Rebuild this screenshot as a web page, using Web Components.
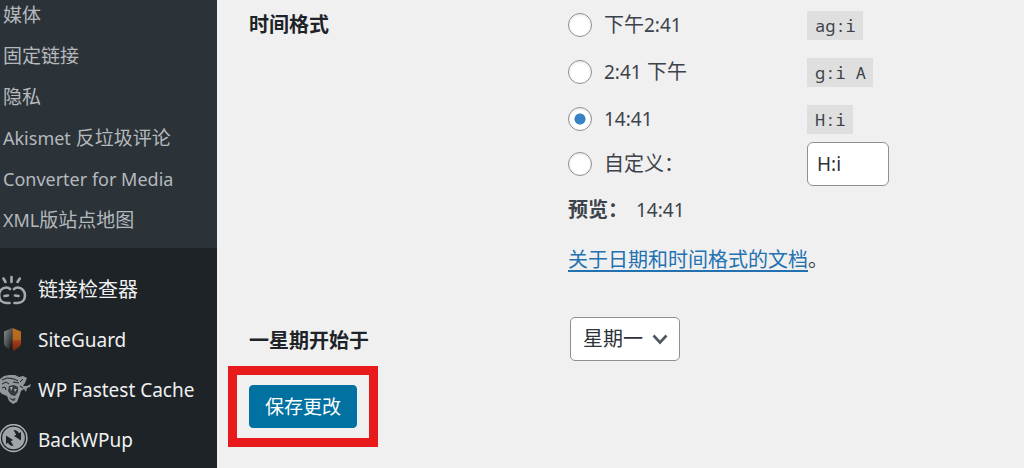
<!DOCTYPE html>
<html lang="zh-CN">
<head>
<meta charset="utf-8">
<title>常规选项</title>
<style>
  body {
    margin: 0;
    background: #f0f0f0;
    color: #3c434a;
    font-family: "Noto Sans", "Noto Sans CJK SC", sans-serif;
    font-size: 20px;
    line-height: 30px;
    overflow: hidden;
  }
</style>
</head>
<body>
<admin-shell>
  <sub-menu slot="side">
    <sub-item>媒体</sub-item>
    <sub-item>固定链接</sub-item>
    <sub-item>隐私</sub-item>
    <sub-item><small>Akismet</small> 反垃圾评论</sub-item>
    <sub-item><small>Converter for Media</small></sub-item>
    <sub-item><small>XML</small>版站点地图</sub-item>
  </sub-menu>
  <main-menu slot="side">
    <menu-item>
      <svg slot="icon" viewBox="0 0 32 32" width="32" height="32" fill="none" stroke="#a7aaad" stroke-width="2.600" stroke-linecap="round" aria-hidden="true">
        <path d="M3.500 4.500 5.500 8M11.500 3V8M19.800 4.500 17.500 8"/>
        <path d="M10 15C9 14 8 13.500 6.500 13.500 2 13.500-.8 17-.8 21.500S2 29 6.500 29H9.500M14 15C15.200 14 16.300 13.500 17.500 13.500 22 13.500 25 17 25 21.500S22 29 17.500 29H14.500M4.500 22 8 21.500M15 21.500 18.500 22"/>
      </svg>
      链接检查器
    </menu-item>
    <menu-item>
      <svg slot="icon" viewBox="0 0 32 32" width="32" height="32" aria-hidden="true">
        <defs>
          <linearGradient id="steel" x1="0" y1="0" x2="1" y2="1"><stop offset="0" stop-color="#8b8d8f"/><stop offset=".45" stop-color="#55585a"/><stop offset="1" stop-color="#070707"/></linearGradient>
          <linearGradient id="ember" x1="0" y1="0" x2="0" y2="1"><stop offset="0" stop-color="#b9721d"/><stop offset=".5" stop-color="#b2651c"/><stop offset=".56" stop-color="#a63d1d"/><stop offset="1" stop-color="#6b2413"/></linearGradient>
        </defs>
        <path d="M12.500 4 4 7.500V20C5 23 9 25.500 12.500 27z" fill="url(#steel)"/>
        <path d="M12.500 4 21 7.500V20C20 23 16 25.500 12.500 27z" fill="url(#ember)"/>
      </svg>
      <small>SiteGuard</small>
    </menu-item>
    <menu-item>
      <svg slot="icon" viewBox="0 0 32 32" width="32" height="32" aria-hidden="true">
        <path d="M0 5 4 2 9 1 15 1 19 3 23 2 27 4 25 9 23 12 27 12 31 10 30 13 27 14 26 18 24 15 21 17 19 23 17 28 13 30 9 27 7 22 2 20 0 18z" fill="#94979a"/>
        <path d="M2 6 7 4 14 5 18 7M2 10 6 8 9 10M13 8 19 9M2 14 5 13 6 16M23 5 20 8M20 12 23 14" fill="none" stroke="#1d2327" stroke-width="1"/>
        <path d="M9 12 14 11 18 13 18 18 15 22 11 21 8 17z" fill="#343a3e"/>
        <path d="M9 23 12 25 16 24 14 27 11 26z" fill="#33393d"/>
        <path d="M10 13 11 17 13 13M17 15 15 18 14 15" fill="#a7aaad"/>
      </svg>
      <small>WP Fastest Cache</small>
    </menu-item>
    <menu-item>
      <svg slot="icon" viewBox="0 0 32 32" width="32" height="32" aria-hidden="true">
        <circle cx="13.500" cy="14" r="13.400" fill="none" stroke="#a7aaad" stroke-width="1.600"/>
        <circle cx="13.500" cy="14" r="11.300" fill="#a1a5a8"/>
        <path id="turn" d="M6 11.500 13 16 10.800 17.300 13.500 22C10.500 22 8.800 20.500 8 18.800L6 20z" fill="#1d2327"/>
        <path d="M21 16.500 14 12 16.200 10.700 13.500 6C16.500 6 18.200 7.500 19 9.200L21 8z" fill="#1d2327"/>
      </svg>
      <small>BackWPup</small>
    </menu-item>
  </main-menu>
  <settings-form></settings-form>
</admin-shell>

<script>
  const define = (name, html) => {
    const template = document.createElement('template');
    template.innerHTML = html;
    customElements.define(name, class extends HTMLElement {
      constructor() {
        super();
        this.attachShadow({ mode: 'open' }).append(template.content.cloneNode(true));
      }
    });
  };

  define('admin-shell', `
    <style>
      :host { display: grid; grid-template-columns: 217px 1fr; min-height: 100vh; }
      nav { background: #1d2327; min-width: 0; }
      main { min-width: 0; padding: 1px 32px 0; }
    </style>
    <nav><slot name="side"></slot></nav>
    <main><slot></slot></main>
  `);

  define('sub-menu', `
    <style>
      :host { display: flex; flex-direction: column; gap: 11px; padding: 0 0 13px 3px; background: #2c3338; color: #b4b9be; font-size: 19px; }
    </style>
    <slot></slot>
  `);

  define('sub-item', `
    <style>
      :host { display: block; }
      a { display: block; height: 30px; color: inherit; text-decoration: none; white-space: nowrap; }
      ::slotted(small) { font-size: 18px; }
    </style>
    <a href="#"><slot></slot></a>
  `);

  define('main-menu', `
    <style>
      :host { display: block; padding-top: 17px; color: #f0f0f1; font-size: 20px; }
    </style>
    <slot></slot>
  `);

  define('menu-item', `
    <style>
      :host { display: block; }
      a { display: flex; align-items: center; gap: 6px; height: 50px; color: inherit; text-decoration: none; white-space: nowrap; }
      ::slotted(svg) { flex: none; }
      ::slotted(small) { font-size: 19px; }
    </style>
    <a href="#"><slot name="icon"></slot><span><slot></slot></span></a>
  `);

  define('settings-row', `
    <style>
      :host { display: grid; grid-template-columns: 319px 1fr; }
      .head { color: #1d2327; font-weight: 600; }
    </style>
    <div class="head"><slot name="head"></slot></div>
    <div><slot></slot></div>
  `);

  define('format-code', `
    <style>
      :host { display: block; }
      code { display: inline-block; padding: 0 7px 0 8px; background: #dfdfdf; font: 17px/29px "Noto Sans Mono", "DejaVu Sans Mono", monospace; white-space: pre; }
    </style>
    <code><slot></slot></code>
  `);

  define('call-out', `
    <style>
      :host { display: block; width: fit-content; margin-left: -21px; padding: 10px 12px; border: 9px solid #e81a1c; }
    </style>
    <slot></slot>
  `);

  define('settings-form', `
    <style>
      :host { display: block; }
      small { font-size: 19px; }
      .title { display: block; padding-top: 9px; }
      .choice { display: grid; grid-template-columns: 24px 191px 1fr; column-gap: 12px; align-items: center; height: 47px; }
      .choice:last-child { height: 44px; }
      input[type=radio] { appearance: none; width: 24px; height: 24px; margin: 0; border: 1px solid #8c8f94; border-radius: 50%; background: #fff; box-shadow: inset 0 1px 3px #0000001a; }
      input[type=radio]:checked { background: radial-gradient(circle, #3582c4 5px, #fff 6px); }
      input[type=text] { box-sizing: border-box; width: 82px; height: 44px; margin: 0; padding: 0 9px; border: 1px solid #8c8f94; border-radius: 6px; background: #fff; color: #2c3338; font: inherit; font-size: 19px; }
      .preview { margin: 4px 0 0; line-height: 40px; }
      .preview small { margin-left: 8px; }
      .doc { margin: 15px 0 42px; }
      .doc a { color: #2271b1; text-underline-offset: 3px; text-decoration-thickness: 2px; }
      .week { display: block; line-height: 48px; }
      .pick { position: relative; display: flex; width: 110px; margin: 0 0 5px 2px; }
      select { appearance: none; width: 100%; height: 44px; margin: 0; padding: 0 12px; border: 1px solid #8c8f94; border-radius: 5px; background: #fff; color: #2c3338; font: inherit; }
      .pick svg { position: absolute; right: 12px; top: 15px; pointer-events: none; }
      button { display: block; height: 43px; margin: 0; padding: 0 15px; border: 1px solid #0071a1; border-radius: 4px; background: #0071a1; color: #fff; font: inherit; font-size: 19px; }
    </style>
    <form>
      <settings-row>
        <span class="title" slot="head" id="time">时间格式</span>
        <div role="radiogroup" aria-labelledby="time">
          <div class="choice"><input type="radio" name="format" id="f1"><label for="f1">下午<small>2:41</small></label><format-code>ag:i</format-code></div>
          <div class="choice"><input type="radio" name="format" id="f2"><label for="f2"><small>2:41</small> 下午</label><format-code>g:i A</format-code></div>
          <div class="choice"><input type="radio" name="format" id="f3" checked><label for="f3"><small>14:41</small></label><format-code>H:i</format-code></div>
          <div class="choice"><input type="radio" name="format" id="f4"><label for="f4">自定义：</label><input type="text" value="H:i" aria-label="自定义时间格式"></div>
        </div>
        <p class="preview"><strong>预览：</strong><small>14:41</small></p>
        <p class="doc"><a href="#">关于日期和时间格式的文档</a>。</p>
      </settings-row>
      <settings-row>
        <label class="week" slot="head" for="week">一星期开始于</label>
        <div class="pick">
          <select id="week"><option>星期一</option></select>
          <svg viewBox="0 0 16 14" width="16" height="14" fill="none" stroke="#50575e" stroke-width="2.600" aria-hidden="true"><path d="M1.500 3.500 8 10.500 14.500 3.500"/></svg>
        </div>
      </settings-row>
      <call-out><button type="button">保存更改</button></call-out>
    </form>
  `);
</script>
</body>
</html>
